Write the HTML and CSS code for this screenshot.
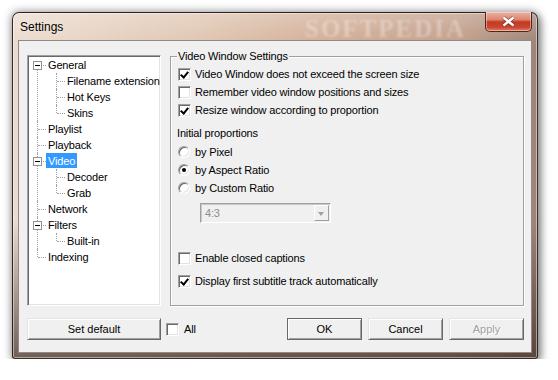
FILE: index.html
```html
<!DOCTYPE html>
<html lang="en">
<head>
    <meta charset="UTF-8">
    <title>Settings</title>
    <link rel="stylesheet" href="styles.css">
</head>
<body>
    <div class="window">
        <div class="titlebar">
            <span class="title">Settings</span>
            <button class="close" aria-label="Close">
                <svg width="15" height="11" viewBox="0 0 15 11">
                    <path d="M2.5 1.5 L12.5 9.5 M12.5 1.5 L2.5 9.5" stroke="#5a1c12" stroke-width="4" stroke-opacity="0.55" fill="none"/>
                    <path d="M2.5 1.5 L12.5 9.5 M12.5 1.5 L2.5 9.5" stroke="#fff" stroke-width="2.4" fill="none"/>
                </svg>
            </button>
        </div>

        <div class="client">
            <!-- Left tree -->
            <div class="tree">
                <ul>
                    <li><span class="box"></span><span class="label">General</span>
                        <ul>
                            <li><span class="label">Filename extension</span></li>
                            <li><span class="label">Hot Keys</span></li>
                            <li><span class="label">Skins</span></li>
                        </ul>
                    </li>
                    <li><span class="label">Playlist</span></li>
                    <li><span class="label">Playback</span></li>
                    <li><span class="box"></span><span class="label sel">Video</span>
                        <ul>
                            <li><span class="label">Decoder</span></li>
                            <li><span class="label">Grab</span></li>
                        </ul>
                    </li>
                    <li><span class="label">Network</span></li>
                    <li><span class="box"></span><span class="label">Filters</span>
                        <ul>
                            <li><span class="label">Built-in</span></li>
                        </ul>
                    </li>
                    <li><span class="label">Indexing</span></li>
                </ul>
            </div>

            <!-- Video page -->
            <div class="group">
                <span class="legend">Video Window Settings</span>
                <label class="opt"><span class="cb on"></span>Video Window does not exceed the screen size</label>
                <label class="opt"><span class="cb"></span>Remember video window positions and sizes</label>
                <label class="opt"><span class="cb on"></span>Resize window according to proportion</label>

                <div class="caption">Initial proportions</div>
                <label class="opt first"><span class="radio"></span>by Pixel</label>
                <label class="opt"><span class="radio on"></span>by Aspect Ratio</label>
                <label class="opt"><span class="radio"></span>by Custom Ratio</label>

                <div class="combo">
                    <span class="value">4:3</span>
                    <span class="arrow"></span>
                </div>

                <label class="opt gap"><span class="cb"></span>Enable closed captions</label>
                <label class="opt last"><span class="cb on"></span>Display first subtitle track automatically</label>
            </div>

            <div class="footer">
                <button class="btn wide">Set default</button>
                <label class="opt all"><span class="cb"></span>All</label>
                <div class="actions">
                    <button class="btn default">OK</button>
                    <button class="btn">Cancel</button>
                    <button class="btn" disabled>Apply</button>
                </div>
            </div>
        </div>

        <div class="mark-title">SOFTPEDIA</div>
    </div>
</body>
</html>
```

FILE: styles.css
```css
body {
    margin: 0;
    background: #fff;
    font-family: "Liberation Sans", Arial, sans-serif;
    font-size: 11px;
    letter-spacing: -0.15px;
    color: #000;
}
.window {
    position: relative;
    margin: 12px 0 0 12px;
    width: 526px;
    height: 347px;
    box-sizing: border-box;
    display: flex;
    flex-direction: column;
    border: 1px solid rgba(40, 28, 24, 0.9);
    border-radius: 7px 7px 3px 3px;
    background-image:
        linear-gradient(to bottom, rgba(255,255,255,0.25) 0, rgba(255,255,255,0) 30px, rgba(0,0,0,0) 60%, rgba(60,42,36,0.7) 100%),
        linear-gradient(to right, #ecdccf 0%, #e0c6b2 35%, #d2ae97 60%, #c29e89 85%, #9e8578 100%);
    box-shadow: inset 0 0 0 1px rgba(255,255,255,0.45), 0 0 8px 1px rgba(0,0,0,0.35), 3px 4px 8px rgba(0,0,0,0.35);
}
.titlebar {
    height: 27px;
    display: flex;
    align-items: center;
    padding-left: 7px;
}
.title {
    font-size: 12px;
    letter-spacing: 0;
    text-shadow: 0 0 6px rgba(255,255,255,0.6);
}
.close {
    align-self: flex-start;
    margin: -1px 5px 0 auto;
    width: 47px;
    height: 20px;
    padding: 0;
    display: flex;
    align-items: center;
    justify-content: center;
    border: 1px solid #5b2219;
    border-top: none;
    border-radius: 0 0 5px 5px;
    background: linear-gradient(to bottom, #eab3a3 0%, #dd8670 40%, #c43b22 52%, #c84630 80%, #e08468 100%);
    box-shadow: inset 0 0 0 1px rgba(255,255,255,0.4);
    position: relative;
    z-index: 2;
}
.client {
    height: 313px;
    margin: 0 5px;
    box-sizing: border-box;
    border: 1px solid rgba(70, 52, 46, 0.55);
    background: #f0f0f0;
    padding: 14px 7px 12px 8px;
    display: grid;
    grid-template-columns: 134px 354px;
    grid-template-rows: 251px 22px;
    gap: 12px 9px;
}

/* tree */
.tree {
    background: #fff;
    border: 1px solid;
    border-color: #a0a0a0 #fff #fff #a0a0a0;
    box-shadow: inset 1px 1px 0 #696969, inset -1px -1px 0 #e3e3e3;
    padding-top: 1px;
    overflow: hidden;
    white-space: nowrap;
}
.tree ul {
    list-style: none;
    margin: 0;
    padding: 0;
}
.tree ul ul {
    margin-left: 1px;
}
.tree li {
    position: relative;
    padding-left: 18px;
    line-height: 16px;
}
.tree li::before {
    content: "";
    position: absolute;
    left: 9px;
    top: 0;
    bottom: 0;
    border-left: 1px dotted #a0a0a0;
}
.tree > ul > li:first-child::before {
    top: 8px;
}
.tree li:last-child::before {
    bottom: auto;
    height: 8px;
}
.tree li::after {
    content: "";
    position: absolute;
    left: 10px;
    top: 8px;
    width: 8px;
    border-top: 1px dotted #a0a0a0;
}
.tree .box {
    position: absolute;
    left: 5px;
    top: 4px;
    width: 7px;
    height: 7px;
    border: 1px solid #919191;
    background: #fff;
    z-index: 1;
}
.tree .box::after {
    content: "";
    position: absolute;
    left: 1px;
    top: 3px;
    width: 5px;
    height: 1px;
    background: #000;
}
.tree .label {
    display: inline-block;
    vertical-align: top;
    height: 15px;
    line-height: 16px;
    padding: 0 2px;
}
.tree .label.sel {
    background: #3399ff;
    color: #fff;
}

/* group box */
.group {
    position: relative;
    align-self: start;
    margin-top: 1px;
    height: 250px;
    box-sizing: border-box;
    border: 1px solid #a0a0a0;
    box-shadow: inset 1px 1px 0 #fff, 1px 1px 0 #fff;
    padding: 8px 0 0 7px;
    display: flex;
    flex-direction: column;
    align-items: flex-start;
    white-space: nowrap;
}
.legend {
    position: absolute;
    top: -8px;
    left: 6px;
    padding: 0 1px;
    line-height: 15px;
    background: #f0f0f0;
}
.opt {
    display: flex;
    align-items: center;
    gap: 4px;
    height: 18px;
    line-height: 19px;
}
.caption {
    margin: 5px 0 0 -1px;
    line-height: 19px;
    height: 18px;
}
.opt.first {
    margin-top: 1px;
}
.opt.gap {
    margin-top: 26px;
}
.opt.last {
    margin-top: 5px;
}
.cb {
    position: relative;
    width: 13px;
    height: 13px;
    box-sizing: border-box;
    background: #fff;
    border: 1px solid;
    border-color: #a0a0a0 #fff #fff #a0a0a0;
    box-shadow: inset 1px 1px 0 #696969, inset -1px -1px 0 #e3e3e3;
}
.cb.on::after {
    content: "";
    position: absolute;
    left: 2px;
    top: 0px;
    width: 3px;
    height: 6px;
    border: solid #000;
    border-width: 0 2px 2px 0;
    transform: translate(1px, 1px) rotate(40deg);
}
.radio {
    position: relative;
    width: 12px;
    height: 12px;
    margin-right: 1px;
    box-sizing: border-box;
    border-radius: 50%;
    background: #fff;
    border: 1px solid;
    border-color: #a0a0a0 #fff #fff #a0a0a0;
    box-shadow: inset 1px 1px 0 #696969, inset -1px -1px 0 #e3e3e3;
}
.radio.on::after {
    content: "";
    position: absolute;
    left: 3px;
    top: 3px;
    width: 4px;
    height: 4px;
    border-radius: 50%;
    background: #000;
}
.combo {
    margin: 6px 0 0 22px;
    width: 131px;
    height: 20px;
    box-sizing: border-box;
    display: flex;
    align-items: center;
    border: 1px solid;
    border-color: #a0a0a0 #fff #fff #a0a0a0;
    box-shadow: inset 1px 1px 0 #c8c8c8;
    background: #f0f0f0;
    color: #8d8d8d;
}
.combo .value {
    padding-left: 4px;
}
.combo .arrow {
    position: relative;
    margin-left: auto;
    margin-right: 1px;
    width: 15px;
    height: 16px;
    box-sizing: border-box;
    border: 1px solid;
    border-color: #fff #a0a0a0 #a0a0a0 #fff;
}
.combo .arrow::after {
    content: "";
    position: absolute;
    left: 3px;
    top: 6px;
    border: 3.5px solid transparent;
    border-top: 4px solid #a0a0a0;
}

/* footer */
.footer {
    grid-column: 1 / -1;
    display: flex;
    align-items: center;
}
.btn {
    width: 75px;
    height: 22px;
    padding: 0;
    box-sizing: border-box;
    font: inherit;
    color: #000;
    background: #f0f0f0;
    border: 1px solid;
    border-color: #e3e3e3 #696969 #696969 #e3e3e3;
    box-shadow: inset 1px 1px 0 #fff, inset -1px -1px 0 #a0a0a0;
}
.btn.wide {
    width: 134px;
}
.btn.default {
    border-color: #696969;
}
.btn:disabled {
    color: #a0a0a0;
    text-shadow: 1px 1px 0 #fff;
}
.all {
    margin-left: 5px;
    gap: 5px;
}
.actions {
    margin-left: auto;
    display: flex;
    gap: 6px;
}

/* watermark in the title bar */
.mark-title {
    position: absolute;
    left: 292px;
    top: 2px;
    pointer-events: none;
    white-space: nowrap;
    font-family: "Liberation Serif", serif;
    font-weight: bold;
    font-size: 25px;
    letter-spacing: 2px;
    color: rgba(255, 255, 255, 0.3);
    filter: blur(1px);
}
```
